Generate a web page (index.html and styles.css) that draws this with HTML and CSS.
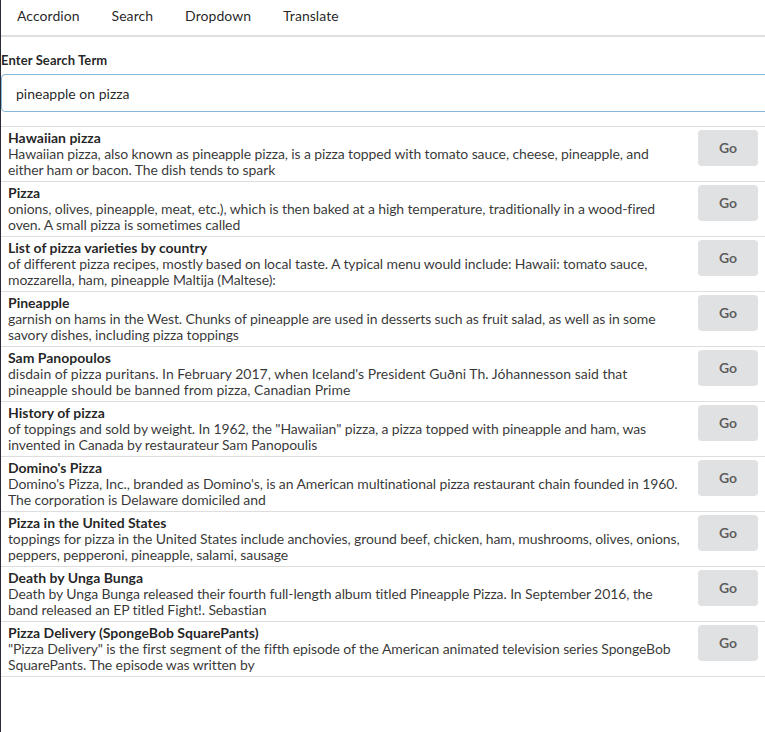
FILE: index.html
```html
<!DOCTYPE html>
<html>
<head>
<meta charset="utf-8">
<link rel="stylesheet" href="styles.css">
</head>
<body>
<div class="page">
  <nav class="menu">
    <a class="menu-item">Accordion</a>
    <a class="menu-item">Search</a>
    <a class="menu-item">Dropdown</a>
    <a class="menu-item">Translate</a>
  </nav>
  <div class="form">
    <div class="field">
      <label class="field-label">Enter Search Term</label>
      <input class="field-input" type="text" value="pineapple on pizza">
    </div>
  </div>
  <div class="list">
    <div class="item">
      <div class="content"><div class="header">Hawaiian pizza</div><div class="description">Hawaiian pizza, also known as pineapple pizza, is a pizza topped with tomato sauce, cheese, pineapple, and either ham or bacon. The dish tends to spark</div></div>
      <button class="btn">Go</button>
    </div>
    <div class="item">
      <div class="content"><div class="header">Pizza</div><div class="description">onions, olives, pineapple, meat, etc.), which is then baked at a high temperature, traditionally in a wood-fired oven. A small pizza is sometimes called</div></div>
      <button class="btn">Go</button>
    </div>
    <div class="item">
      <div class="content"><div class="header">List of pizza varieties by country</div><div class="description">of different pizza recipes, mostly based on local taste. A typical menu would include: Hawaii: tomato sauce, mozzarella, ham, pineapple Maltija (Maltese):</div></div>
      <button class="btn">Go</button>
    </div>
    <div class="item">
      <div class="content"><div class="header">Pineapple</div><div class="description">garnish on hams in the West. Chunks of pineapple are used in desserts such as fruit salad, as well as in some savory dishes, including pizza toppings</div></div>
      <button class="btn">Go</button>
    </div>
    <div class="item">
      <div class="content"><div class="header">Sam Panopoulos</div><div class="description description-wide">disdain of pizza puritans. In February 2017, when Iceland's President Guðni Th. Jóhannesson said that pineapple should be banned from pizza, Canadian Prime</div></div>
      <button class="btn">Go</button>
    </div>
    <div class="item">
      <div class="content"><div class="header">History of pizza</div><div class="description">of toppings and sold by weight. In 1962, the "Hawaiian" pizza, a pizza topped with pineapple and ham, was invented in Canada by restaurateur Sam Panopoulis</div></div>
      <button class="btn">Go</button>
    </div>
    <div class="item">
      <div class="content"><div class="header">Domino's Pizza</div><div class="description">Domino's Pizza, Inc., branded as Domino's, is an American multinational pizza restaurant chain founded in 1960. The corporation is Delaware domiciled and</div></div>
      <button class="btn">Go</button>
    </div>
    <div class="item">
      <div class="content"><div class="header">Pizza in the United States</div><div class="description">toppings for pizza in the United States include anchovies, ground beef, chicken, ham, mushrooms, olives, onions, peppers, pepperoni, pineapple, salami, sausage</div></div>
      <button class="btn">Go</button>
    </div>
    <div class="item">
      <div class="content"><div class="header">Death by Unga Bunga</div><div class="description">Death by Unga Bunga released their fourth full-length album titled Pineapple Pizza. In September 2016, the band released an EP titled Fight!. Sebastian</div></div>
      <button class="btn">Go</button>
    </div>
    <div class="item">
      <div class="content"><div class="header">Pizza Delivery (SpongeBob SquarePants)</div><div class="description">"Pizza Delivery" is the first segment of the fifth episode of the American animated television series SpongeBob SquarePants. The episode was written by</div></div>
      <button class="btn">Go</button>
    </div>
  </div>
</div>
</body>
</html>
```

FILE: styles.css
```css
html, body {
  margin: 0;
  padding: 0;
  background: #ffffff;
}
body {
  font-family: Lato, "Helvetica Neue", Arial, sans-serif;
  font-size: 14px;
  color: rgba(0, 0, 0, 0.87);
  border-left: 1px solid #262b35;
  min-height: 732px;
  box-sizing: border-box;
  overflow: hidden;
}
.page {
  overflow: hidden;
}
.menu {
  display: flex;
  border-bottom: 2px solid #dedede;
  height: 35px;
  box-sizing: content-box;
}
.menu-item {
  padding: 8px 16px 12px;
  line-height: 15px;
  color: rgba(0, 0, 0, 0.87);
  letter-spacing: 0.05px;
  cursor: pointer;
}
.form {
  margin-top: 15px;
}
.field-label {
  display: block;
  font-size: 13px;
  font-weight: 700;
  line-height: 16px;
  margin: 0 0 6px;
  letter-spacing: 0.1px;
}
.field-input {
  display: block;
  width: calc(100% + 20px);
  box-sizing: border-box;
  margin: 0;
  padding: 9.5px 14px;
  height: 38px;
  font-family: Lato, "Helvetica Neue", Arial, sans-serif;
  font-size: 14px;
  line-height: 17px;
  color: rgba(0, 0, 0, 0.87);
  border: 1px solid #85b7d9;
  border-radius: 4px;
  outline: none;
  background: #fff;
}
.list {
  margin-top: 14px;
}
.item {
  display: flex;
  align-items: flex-start;
  border-top: 1px solid #dedede;
  padding: 3px 7px 3px 7px;
}
.item:last-child {
  border-bottom: 1px solid #dedede;
}
.content {
  flex: 1;
  margin-right: 14px;
  line-height: 16px;
}
.header {
  font-weight: 700;
  color: rgba(0, 0, 0, 0.87);
}
.description {
  color: rgba(0, 0, 0, 0.8);
  letter-spacing: -0.11px;
}
.description-wide {
  letter-spacing: 0;
}
.btn {
  flex: none;
  font-family: Lato, "Helvetica Neue", Arial, sans-serif;
  font-size: 14px;
  font-weight: 700;
  line-height: 14px;
  padding: 11px 21px;
  border: none;
  border-radius: 4px;
  background: #e0e1e2;
  color: rgba(0, 0, 0, 0.6);
  margin: 0;
  cursor: pointer;
}
```
